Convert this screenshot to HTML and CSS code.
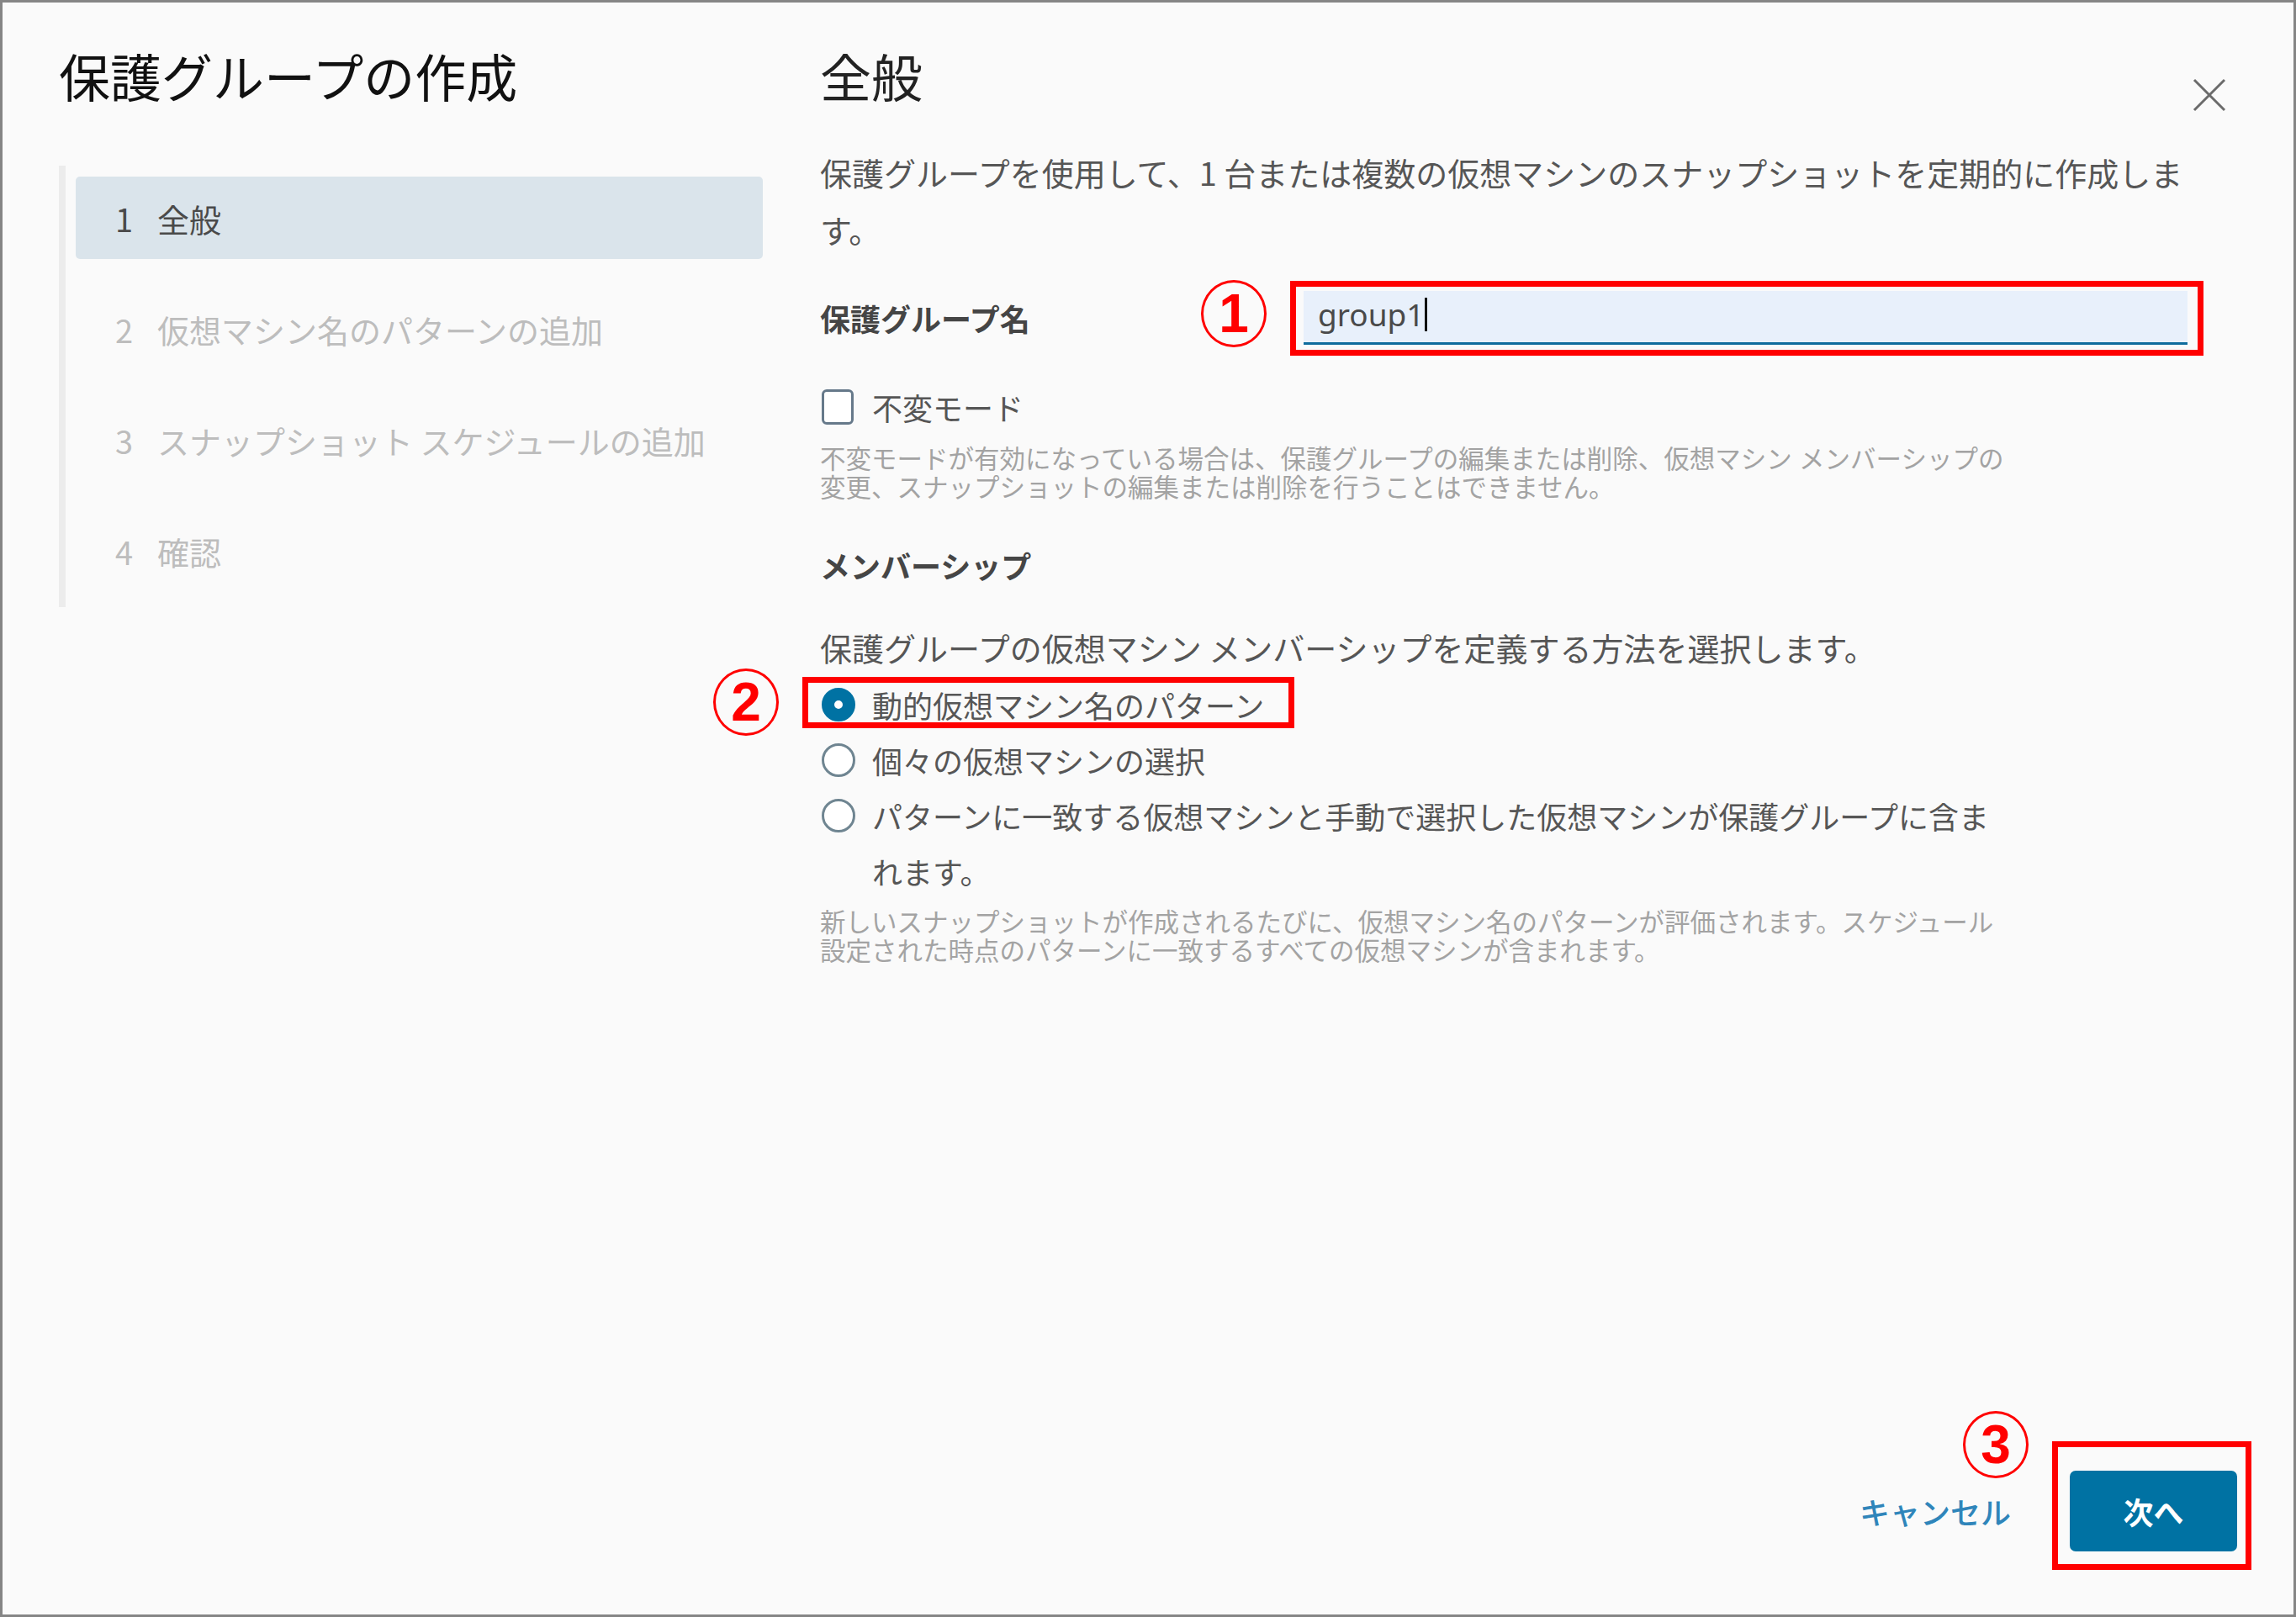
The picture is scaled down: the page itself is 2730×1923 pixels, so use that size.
FILE: index.html
```html
<!DOCTYPE html>
<html lang="ja">
<head>
  <meta charset="UTF-8">
  <meta name="viewport" content="width=device-width, initial-scale=1.0">
  <title>保護グループの作成</title>
  <link rel="stylesheet" href="styles.css">
</head>
<body>
  <div class="modal">
    <div class="modal-body">
      <aside class="sidebar">
        <h1 class="modal-title">保護グループの作成</h1>
        <nav class="steps">
          <div class="step active"><span class="step-num">1</span>全般</div>
          <div class="step"><span class="step-num">2</span>仮想マシン名のパターンの追加</div>
          <div class="step"><span class="step-num">3</span>スナップショット スケジュールの追加</div>
          <div class="step"><span class="step-num">4</span>確認</div>
        </nav>
      </aside>

      <main class="content">
        <div class="content-header">
          <h2 class="section-heading">全般</h2>
          <button class="close-btn" aria-label="閉じる">
            <svg width="40" height="40" viewBox="0 0 40 40">
              <path d="M2 2 L38 38 M38 2 L2 38" stroke="#6b6b6b" stroke-width="3" fill="none"/>
            </svg>
          </button>
        </div>

        <p class="desc">保護グループを使用して、1 台または複数の仮想マシンのスナップショットを定期的に作成します。</p>

        <div class="field-row">
          <label class="field-label">保護グループ名</label>
          <span class="mark-num mark-1">1</span>
          <div class="text-input">
            <span>group1</span><span class="caret"></span>
            <span class="mark-box mark-box-1"></span>
          </div>
        </div>

        <div class="check-row">
          <span class="checkbox"></span>
          <span class="check-label">不変モード</span>
        </div>
        <p class="helper">不変モードが有効になっている場合は、保護グループの編集または削除、仮想マシン メンバーシップの<br>変更、スナップショットの編集または削除を行うことはできません。</p>

        <h3 class="group-title">メンバーシップ</h3>
        <p class="prompt">保護グループの仮想マシン メンバーシップを定義する方法を選択します。</p>

        <div class="radio-list">
          <span class="mark-num mark-2">2</span>
          <div class="radio-row">
            <span class="radio checked"></span>
            <span class="radio-label">動的仮想マシン名のパターン</span>
            <span class="mark-box mark-box-2"></span>
          </div>
          <div class="radio-row">
            <span class="radio"></span>
            <span class="radio-label">個々の仮想マシンの選択</span>
          </div>
          <div class="radio-row">
            <span class="radio"></span>
            <span class="radio-label">パターンに一致する仮想マシンと手動で選択した仮想マシンが保護グループに含まれます。</span>
          </div>
        </div>
        <p class="helper helper-2">新しいスナップショットが作成されるたびに、仮想マシン名のパターンが評価されます。スケジュール<br>設定された時点のパターンに一致するすべての仮想マシンが含まれます。</p>
      </main>
    </div>

    <footer class="modal-footer">
      <button class="btn-cancel">キャンセル</button>
      <button class="btn-next">次へ
        <span class="mark-num mark-3">3</span>
        <span class="mark-box mark-box-3"></span>
      </button>
    </footer>
  </div>
</body>
</html>
```

FILE: styles.css
```css
body {
  margin: 0;
  font-family: "Noto Sans CJK JP", "Noto Sans", sans-serif;
  background-color: #fafafa;
  color: #565656;
}
.modal {
  box-sizing: border-box;
  width: 100%;
  height: 100vh;
  border: 3px solid #858585;
  background-color: #fafafa;
  display: flex;
  flex-direction: column;
}
.modal-body {
  flex: 1;
  display: flex;
  padding-top: 47px;
}
.sidebar {
  flex: 0 0 837px;
  margin-left: 67px;
  margin-right: 68px;
}
.modal-title {
  margin: 0;
  font-size: 61px;
  line-height: 80px;
  font-weight: 400;
  color: #111;
}
.steps {
  margin-top: 67px;
  border-left: 8px solid #ececec;
  padding: 13px 0 18px 12px;
}
.step {
  display: flex;
  align-items: center;
  height: 98px;
  padding-left: 47px;
  margin-bottom: 34px;
  font-size: 38px;
  color: #bdbdbd;
  border-radius: 5px;
}
.step:last-child {
  margin-bottom: 0;
}
.step.active {
  background-color: #dae4eb;
  color: #4a4a4a;
}
.step-num {
  display: inline-block;
  width: 50px;
}
.content {
  flex: 1;
  padding-right: 80px;
}
.content-header {
  display: flex;
  justify-content: space-between;
  align-items: flex-start;
}
.section-heading {
  margin: 0;
  font-size: 61px;
  line-height: 80px;
  font-weight: 400;
  color: #222;
}
.close-btn {
  margin-top: 43px;
  padding: 0;
  width: 40px;
  height: 40px;
  border: none;
  background: none;
  cursor: pointer;
}
.close-btn svg {
  display: block;
}
.desc {
  margin: 38px 0 0;
  font-size: 38px;
  line-height: 68px;
}
.field-row {
  display: flex;
  align-items: center;
  margin-top: 36px;
}
.field-label {
  flex: 0 0 453px;
  font-size: 36px;
  font-weight: 700;
  line-height: 64px;
  color: #454545;
}
.text-input {
  position: relative;
  box-sizing: border-box;
  flex: 0 0 1051px;
  height: 64px;
  display: flex;
  align-items: center;
  padding: 0 0 6px 17px;
  background-color: #e8f0fb;
  border-bottom: 3px solid #0f6c9d;
  font-family: "Noto Sans", sans-serif;
  font-size: 37px;
  color: #4a4a4a;
}
.caret {
  display: inline-block;
  width: 3px;
  height: 40px;
  margin-left: 1px;
  background-color: #111;
}
.check-row {
  display: flex;
  align-items: center;
  height: 44px;
  margin-top: 49px;
}
.checkbox {
  box-sizing: border-box;
  width: 38px;
  height: 42px;
  margin-left: 2px;
  border: 3px solid #66798a;
  border-radius: 6px;
  background-color: #fff;
}
.check-label {
  margin-left: 22px;
  font-size: 36px;
}
.helper {
  margin: 23px 0 0;
  font-family: "Liberation Sans", "Noto Sans CJK JP", sans-serif;
  font-size: 30.5px;
  line-height: 34px;
  color: #a3a3a3;
}
.helper-2 {
  margin-top: 11px;
}
.group-title {
  margin: 50px 0 0;
  font-size: 36px;
  line-height: 50px;
  font-weight: 700;
  color: #454545;
}
.prompt {
  margin: 43px 0 0;
  font-size: 38px;
  line-height: 60px;
}
.radio-list {
  position: relative;
  max-width: 1410px;
  margin-top: 5px;
}
.radio-row {
  position: relative;
  display: flex;
  align-items: flex-start;
}
.radio {
  flex: 0 0 auto;
  box-sizing: border-box;
  width: 40px;
  height: 40px;
  margin: 13px 0 0 2px;
  border: 3px solid #6f8591;
  border-radius: 50%;
  background-color: #fff;
}
.radio.checked {
  border: 15px solid #0072a3;
  background-color: #fff;
}
.radio-label {
  margin-left: 20px;
  font-size: 36px;
  line-height: 66px;
}
.modal-footer {
  display: flex;
  justify-content: flex-end;
  align-items: center;
  padding: 0 67px 75px 0;
}
.btn-cancel {
  margin-right: 70px;
  padding: 0;
  border: none;
  background: none;
  font-family: inherit;
  font-size: 36px;
  font-weight: 500;
  color: #2f85ba;
  cursor: pointer;
}
.btn-next {
  position: relative;
  width: 199px;
  height: 96px;
  border: none;
  border-radius: 7px;
  background-color: #0072a3;
  color: #fff;
  font-family: inherit;
  font-size: 36px;
  font-weight: 700;
  cursor: pointer;
}

/* annotations */
.mark-box {
  position: absolute;
  border: 7px solid #ff0000;
  pointer-events: none;
}
.mark-box-1 {
  top: -12px;
  left: -16px;
  right: -19px;
  bottom: -16px;
}
.mark-box-2 {
  top: 0;
  left: -21px;
  width: 585px;
  height: 61px;
  box-sizing: border-box;
}
.mark-box-3 {
  top: -35px;
  left: -21px;
  right: -17px;
  bottom: -22px;
}
.mark-num {
  box-sizing: border-box;
  width: 78px;
  height: 80px;
  border: 3px solid #ff0000;
  border-radius: 50%;
  display: flex;
  align-items: center;
  justify-content: center;
  font-family: "Liberation Sans", sans-serif;
  font-size: 64px;
  font-weight: 700;
  color: #ff0000;
}
.mark-1 {
  flex: 0 0 auto;
  margin: -10px 44px 0 0;
}
.mark-2,
.mark-3 {
  position: absolute;
}
.mark-2 {
  left: -127px;
  top: -10px;
}
.mark-3 {
  left: -127px;
  top: -71px;
}
```
